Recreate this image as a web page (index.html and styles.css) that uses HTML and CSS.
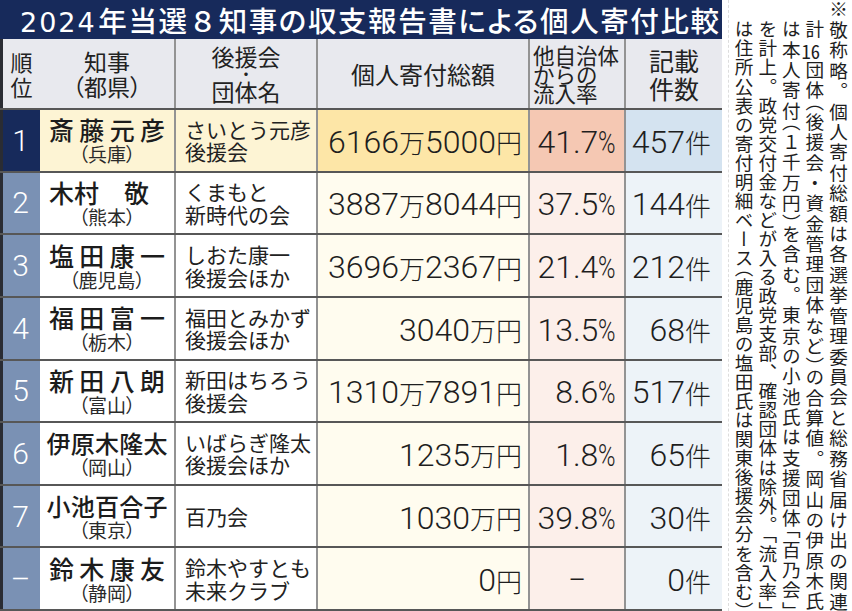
FILE: index.html
```html
<!DOCTYPE html>
<html lang="ja">
<head>
<meta charset="utf-8">
<title>2024年当選８知事の収支報告書による個人寄付比較</title>
<link rel="stylesheet" href="styles.css">
</head>
<body>
<div class="page">
  <div class="chart">
    <div class="title"><span class="yr">2024</span>年当選<span class="fw">８</span>知事の収支報告書による個人寄付比較</div>
    <div class="row head">
      <div class="c rank"><div class="hx">順<br>位</div></div>
      <div class="c name"><div class="hn">知事<br><span class="pa">（都県）</span></div></div>
      <div class="c grp"><div class="hg"><div>後援会</div><div class="dot">・</div><div>団体名</div></div></div>
      <div class="c amt"><div class="ha">個人寄付総額</div></div>
      <div class="c rate"><div class="hr">他自治体<br>からの<br>流入率</div></div>
      <div class="c cnt"><div class="hc">記載<br>件数</div></div>
    </div>

    <div class="row r1">
      <div class="c rank">1</div>
      <div class="c name"><span class="nm">斎藤元彦</span><span class="pf">（兵庫）</span></div>
      <div class="c grp">さいとう元彦<br>後援会</div>
      <div class="c amt">6166<span class="u">万</span>5000<span class="u">円</span></div>
      <div class="c rate">41.7<span class="pc">%</span></div>
      <div class="c cnt">457<span class="u">件</span></div>
    </div>

    <div class="row">
      <div class="c rank">2</div>
      <div class="c name"><span class="nm nj">木村　敬</span><span class="pf">（熊本）</span></div>
      <div class="c grp">くまもと<br>新時代の会</div>
      <div class="c amt">3887<span class="u">万</span>8044<span class="u">円</span></div>
      <div class="c rate">37.5<span class="pc">%</span></div>
      <div class="c cnt">144<span class="u">件</span></div>
    </div>

    <div class="row">
      <div class="c rank">3</div>
      <div class="c name"><span class="nm">塩田康一</span><span class="pf">（鹿児島）</span></div>
      <div class="c grp">しおた康一<br>後援会ほか</div>
      <div class="c amt">3696<span class="u">万</span>2367<span class="u">円</span></div>
      <div class="c rate">21.4<span class="pc">%</span></div>
      <div class="c cnt">212<span class="u">件</span></div>
    </div>

    <div class="row">
      <div class="c rank">4</div>
      <div class="c name"><span class="nm">福田富一</span><span class="pf">（栃木）</span></div>
      <div class="c grp">福田とみかず<br>後援会ほか</div>
      <div class="c amt">3040<span class="u">万円</span></div>
      <div class="c rate">13.5<span class="pc">%</span></div>
      <div class="c cnt">68<span class="u">件</span></div>
    </div>

    <div class="row">
      <div class="c rank">5</div>
      <div class="c name"><span class="nm">新田八朗</span><span class="pf">（富山）</span></div>
      <div class="c grp">新田はちろう<br>後援会</div>
      <div class="c amt">1310<span class="u">万</span>7891<span class="u">円</span></div>
      <div class="c rate">8.6<span class="pc">%</span></div>
      <div class="c cnt">517<span class="u">件</span></div>
    </div>

    <div class="row">
      <div class="c rank">6</div>
      <div class="c name"><span class="nm n5">伊原木隆太</span><span class="pf">（岡山）</span></div>
      <div class="c grp">いばらぎ隆太<br>後援会ほか</div>
      <div class="c amt">1235<span class="u">万円</span></div>
      <div class="c rate">1.8<span class="pc">%</span></div>
      <div class="c cnt">65<span class="u">件</span></div>
    </div>

    <div class="row">
      <div class="c rank">7</div>
      <div class="c name"><span class="nm n5">小池百合子</span><span class="pf">（東京）</span></div>
      <div class="c grp">百乃会</div>
      <div class="c amt">1030<span class="u">万円</span></div>
      <div class="c rate">39.8<span class="pc">%</span></div>
      <div class="c cnt">30<span class="u">件</span></div>
    </div>

    <div class="row">
      <div class="c rank">–</div>
      <div class="c name"><span class="nm">鈴木康友</span><span class="pf">（静岡）</span></div>
      <div class="c grp">鈴木やすとも<br>未来クラブ</div>
      <div class="c amt">0<span class="u">円</span></div>
      <div class="c rate mid">−</div>
      <div class="c cnt">0<span class="u">件</span></div>
    </div>
  </div>

  <div class="notes">
    <div class="col">※敬称略。個人寄付総額は各選挙管理委員会と総務省届け出の関連</div>
    <div class="col ind">計<span class="tcy">16</span>団体<span class="h">（</span>後援会・資金管理団体など<span class="h">）</span>の合算値。岡山の伊原木氏</div>
    <div class="col ind">は本人寄付<span class="h">（</span>１千万円<span class="h">）</span>を含む。東京の小池氏は支援団体<span class="h">「</span>百乃会<span class="h">」</span></div>
    <div class="col ind">を計上。政党交付金などが入る政党支部、確認団体は除外。<span class="h">「</span>流入率<span class="h">」</span></div>
    <div class="col ind">は住所公表の寄付明細ベース<span class="h">（</span>鹿児島の塩田氏は関東後援会分を含む<span class="h">）</span></div>
  </div>
</div>
</body>
</html>
```

FILE: styles.css
```css
* { box-sizing: border-box; margin: 0; padding: 0; }

html, body {
  width: 852px;
  height: 611px;
  overflow: hidden;
  background: #ffffff;
}

body {
  font-family: "Noto Sans CJK JP", sans-serif;
  color: #222222;
}

.page {
  display: flex;
  height: 611px;
}

.chart {
  width: 722px;
  height: 611px;
  display: flex;
  flex-direction: column;
  flex: none;
}

/* title */
.title {
  height: 39px;
  flex: none;
  background: #172a5b;
  color: #ffffff;
  font-size: 28.5px;
  font-weight: 500;
  line-height: 39px;
  padding: 0 3px 0 20px;
  text-align: justify;
  text-align-last: justify;
  font-feature-settings: "palt";
  overflow: hidden;
}

.yr {
  font-family: "DejaVu Sans", sans-serif;
  font-weight: 400;
  letter-spacing: 2px;
  font-size: 27px;
}

.fw { font-feature-settings: normal; }

/* rows */
.row {
  display: grid;
  grid-template-columns: 40px 136px 142px 212px 96px 96px;
  grid-template-rows: 100%;
  border-bottom: 2px solid #575757;
  flex: 1 1 0;
  min-height: 0;
}

.row.head {
  flex: none;
  height: 71px;
  background: #e8e9ee;
}

.c {
  display: flex;
  align-items: center;
  border-right: 2px solid #939393;
  min-width: 0;
  min-height: 0;
  overflow: visible;
}

.rank {
  border-left: 3px solid #2a2c33;
  border-right: none;
  justify-content: center;
  background: #7a91b4;
  color: #ffffff;
  font-family: Roboto, "Open Sans", sans-serif;
  font-weight: 300;
  font-size: 30px;
  padding-right: 2px;
}

.cnt { border-right: none; }

/* header */
.head .c {
  justify-content: center;
  text-align: center;
  background: #e8e9ee;
  color: #222222;
  font-family: "Noto Sans CJK JP", sans-serif;
  font-weight: 400;
  padding: 0;
}

.hx { font-size: 22px; line-height: 25px; }
.hn { font-size: 23px; line-height: 25px; }
.pa { font-feature-settings: "palt"; }
.hg { font-size: 23px; line-height: 24px; }
.hg .dot { line-height: 11px; height: 11px; font-size: 16px; }
.ha { font-size: 24px; }
.head .rate { justify-content: flex-start; text-align: left; padding-left: 3px; }
.hr { font-size: 21.5px; line-height: 19px; white-space: nowrap; }
.hc { font-size: 25px; line-height: 28px; }

/* body cells */
.name {
  flex-direction: column;
  justify-content: center;
  background: #ffffff;
  padding-top: 1px;
}

.nm {
  display: block;
  width: 116px;
  font-size: 25px;
  font-weight: 500;
  line-height: 27px;
  text-align: justify;
  text-align-last: justify;
  color: #1c1c1c;
}

.nm.nj { text-align-last: left; }
.nm.n5 { width: 121px; font-size: 24px; }

.pf {
  display: block;
  font-size: 19px;
  line-height: 22px;
  font-feature-settings: "palt";
  color: #2a2a2a;
}

.grp {
  background: #ffffff;
  padding-left: 9px;
  font-size: 21px;
  line-height: 22.5px;
}

.amt,
.rate,
.cnt {
  justify-content: flex-end;
  font-family: Roboto, "Open Sans", sans-serif;
  font-size: 32px;
  font-weight: 300;
  color: #1e1e1e;
  padding-top: 3px;
  white-space: nowrap;
}

.amt { background: #fffcef; padding-right: 6px; }
.rate { background: #fcefea; padding-right: 8px; }
.cnt { background: #edf3f8; padding-right: 11px; }
.rate.mid { justify-content: center; padding-right: 0; }

.u {
  font-family: "Noto Sans CJK JP", sans-serif;
  font-size: 26px;
  font-weight: 300;
}

.pc {
  display: inline-block;
  transform: scaleX(0.74);
  transform-origin: left center;
  margin-right: -6px;
}

/* row 1 highlight */
.r1 .rank { background: #172a5b; }
.r1 .name,
.r1 .grp { background: #fdf4d4; }
.r1 .amt { background: #fde6a7; }
.r1 .rate { background: #f5c8b3; }
.r1 .cnt { background: #d4e3f0; }

/* vertical notes */
.notes {
  flex: none;
  width: 124px;
  height: 611px;
  margin-left: 6px;
  border-left: 1px dashed #dddddd;
  writing-mode: vertical-rl;
  padding-right: 2px;
  overflow: hidden;
  color: #1e1e1e;
}

.col {
  height: 611px;
  font-size: 18.6px;
  line-height: 23.6px;
  text-align: justify;
  text-align-last: justify;
}

.col.ind { padding-top: 20.4px; }

.tcy { text-combine-upright: all; }

.h { font-feature-settings: "vhal" 1; }
```
